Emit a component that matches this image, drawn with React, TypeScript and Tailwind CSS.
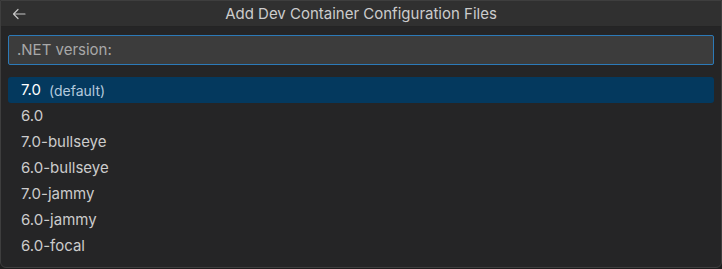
import React from "react";

const items = ["7.0", "6.0", "7.0-bullseye", "6.0-bullseye", "7.0-jammy", "6.0-jammy", "6.0-focal"];

export default function App() {
  return (
    <div
      className="w-[722px] h-[269px] bg-[#1e1e1e] overflow-hidden"
      style={{ fontFamily: "Inter, 'Noto Sans', sans-serif" }}
    >
      <div className="w-[722px] h-[268px] bg-[#252526] border border-[#3e3e3e] rounded-b-[6px] flex flex-col overflow-hidden">
        <div className="h-[26px] shrink-0 bg-[#303030] border-b border-[#242424] flex items-center relative">
          <svg className="absolute left-[10px] top-[5px]" width="16" height="16" viewBox="0 0 16 16" fill="none">
            <path d="M7 3.5L2.5 8L7 12.5M2.5 8H14" stroke="#c5c5c5" strokeWidth="1.2" strokeLinecap="round" strokeLinejoin="round" />
          </svg>
          <div className="w-full text-center text-[15px] text-[#cccccc] leading-none">Add Dev Container Configuration Files</div>
        </div>
        <div className="px-[7px] pt-[8px]">
          <div className="h-[30px] bg-[#3c3c3c] border border-[#2c7ab8] rounded-[2px] flex items-center px-[8px] text-[15px] text-[#a8a8a8]">
            .NET version:
          </div>
        </div>
        <div className="px-[7px] pt-[12px] flex flex-col">
          {items.map((it, i) => (
            <div
              key={it}
              className={
                "h-[26px] flex items-center pl-[13px] text-[15px] rounded-[3px] " +
                (i === 0 ? "bg-[#04395e] text-white" : "text-[#cccccc]")
              }
            >
              <span>{it}</span>
              {i === 0 && <span className="ml-[8px] text-[14px] text-[#b4c9dc]">(default)</span>}
            </div>
          ))}
        </div>
      </div>
    </div>
  );
}
